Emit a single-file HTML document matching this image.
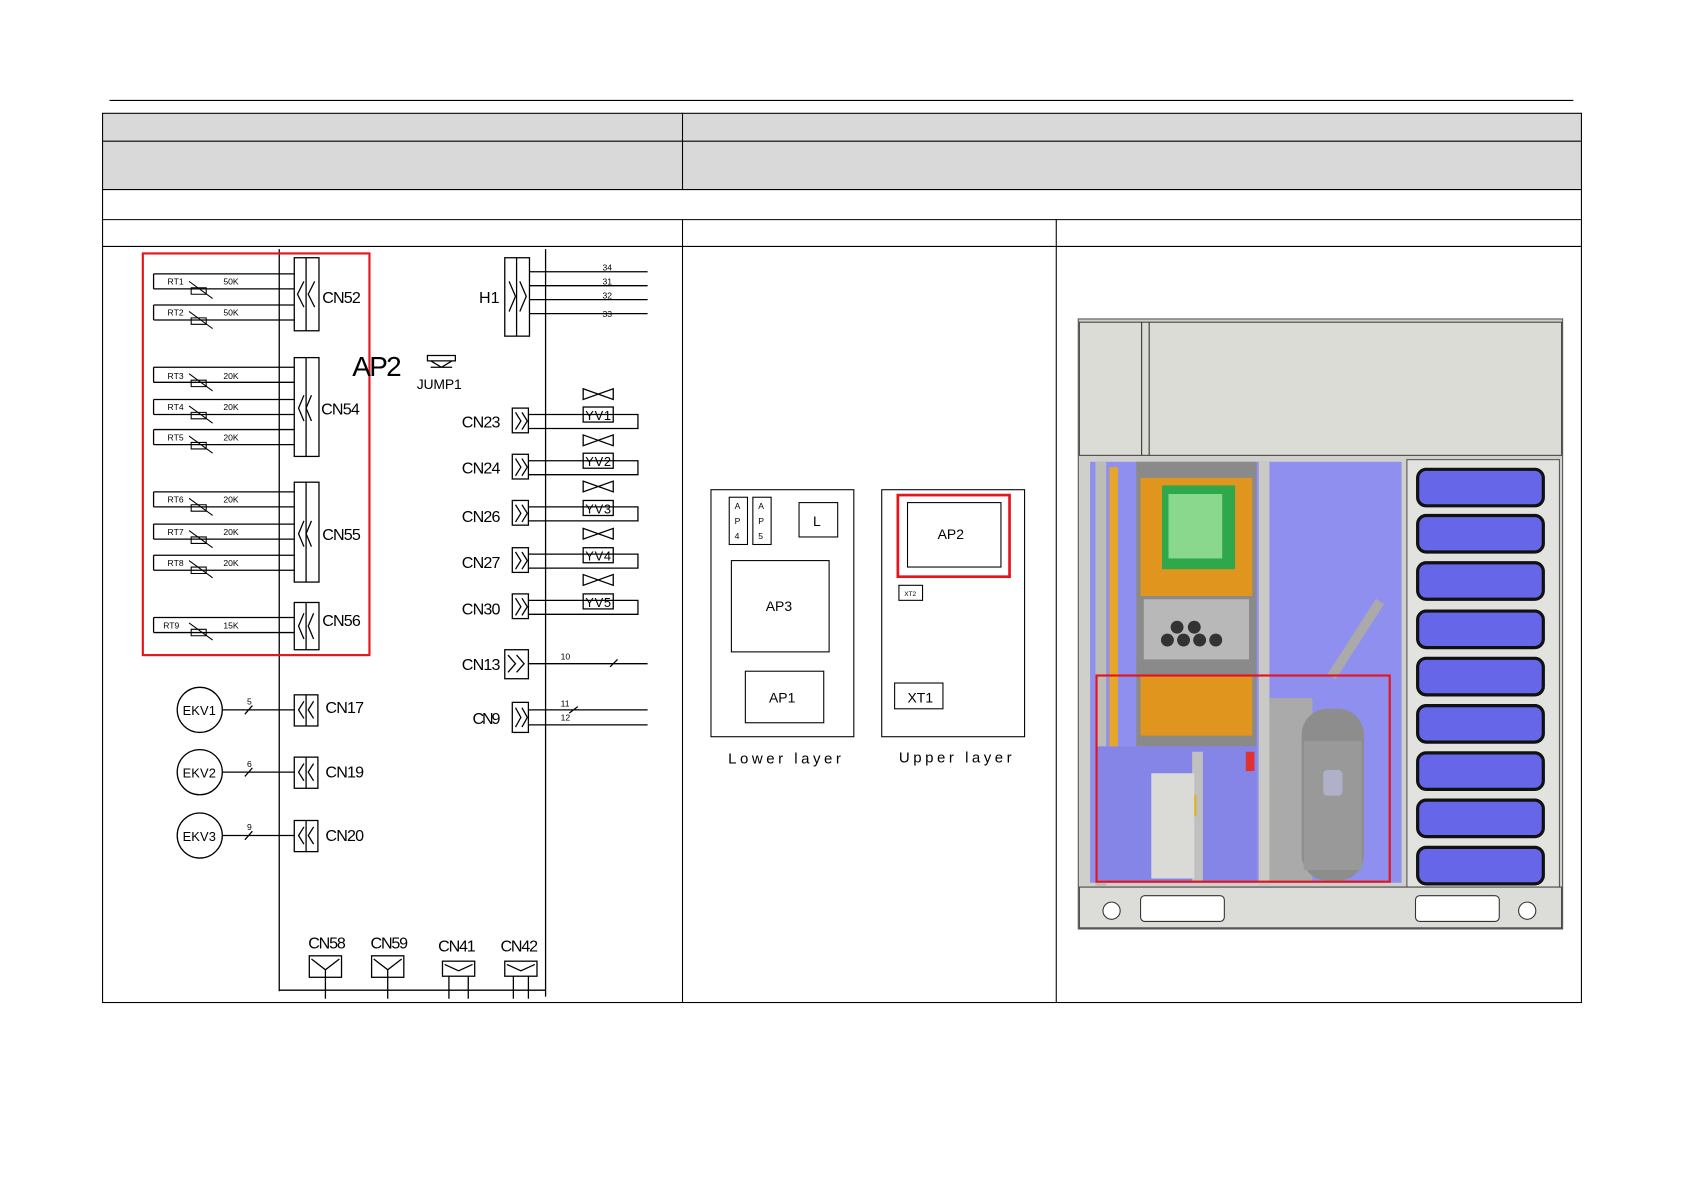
<!DOCTYPE html>
<html><head><meta charset="utf-8"><style>
html,body{margin:0;padding:0;background:#fff;}
svg{display:block;}
text{font-family:"Liberation Sans",sans-serif;}
</style></head><body>
<svg width="1684" height="1191" viewBox="0 0 1568 1109" preserveAspectRatio="none" xmlns="http://www.w3.org/2000/svg">
<rect width="1568" height="1109" fill="#fff"/>
<line x1="102" y1="93.5" x2="1465" y2="93.5" stroke="#000" stroke-width="1"/>
<rect x="95.5" y="105.5" width="1377" height="71" fill="#d9d9d9"/>
<g stroke="#000" stroke-width="1" fill="none">
<rect x="95.5" y="105.5" width="1377" height="828"/>
<line x1="95" y1="131.5" x2="1472" y2="131.5"/>
<line x1="95" y1="176.5" x2="1472" y2="176.5"/>
<line x1="95" y1="204.5" x2="1472" y2="204.5"/>
<line x1="95" y1="229.5" x2="1472" y2="229.5"/>
<line x1="635.5" y1="105" x2="635.5" y2="176"/>
<line x1="635.5" y1="204" x2="635.5" y2="933"/>
<line x1="983.5" y1="204" x2="983.5" y2="933"/>
</g>
<g stroke="#000" stroke-width="1.2" fill="none">
<line x1="260" y1="232" x2="260" y2="923"/>
<line x1="508" y1="232" x2="508" y2="928"/>
<line x1="260" y1="922" x2="508" y2="922"/>
<path d="M143 255H274M143 269H274M143 284H274M143 298H274"/>
<path d="M143 342H274M143 356H274M143 372H274M143 386H274M143 400H274M143 414H274"/>
<path d="M143 458H274M143 472H274M143 488H274M143 502H274M143 517H274M143 531H274"/>
<path d="M143 575H274M143 589H274"/>
<path d="M143 255V269M143 284V298M143 342V356M143 372V386M143 400V414M143 458V472M143 488V502M143 517V531M143 575V589"/>
<rect x="274" y="240" width="23" height="68"/><line x1="285" y1="240" x2="285" y2="308"/>
<path d="M283 262l-6 12 6 12M293 262l-6 12 6 12"/>
<rect x="274" y="333" width="23" height="92"/><line x1="285" y1="333" x2="285" y2="425"/>
<path d="M283 368l-5 12 5 12M290 368l-5 12 5 12"/>
<rect x="274" y="449" width="23" height="93"/><line x1="285" y1="449" x2="285" y2="542"/>
<path d="M283 485l-5 12 5 12M290 485l-5 12 5 12"/>
<rect x="274" y="561" width="23" height="44"/><line x1="285" y1="561" x2="285" y2="605"/>
<path d="M283 571l-5 12 5 12M292 571l-5 12 5 12"/>
<circle cx="186" cy="661" r="21"/><circle cx="186" cy="719" r="21"/><circle cx="186" cy="778" r="21"/>
<path d="M207 661H274M207 719H274M207 778H274M228 665l7-8M228 723l7-8M228 782l7-8"/>
<rect x="274" y="647" width="22" height="29"/><line x1="285" y1="647" x2="285" y2="676"/><path d="M283 653l-5 8 5 8M292 653l-5 8 5 8"/>
<rect x="274" y="705" width="22" height="29"/><line x1="285" y1="705" x2="285" y2="734"/><path d="M283 711l-5 8 5 8M292 711l-5 8 5 8"/>
<rect x="274" y="764" width="22" height="29"/><line x1="285" y1="764" x2="285" y2="793"/><path d="M283 770l-5 8 5 8M292 770l-5 8 5 8"/>
<rect x="288" y="890" width="30" height="20"/><path d="M290 893l13 10 13-10M303 903V930"/>
<rect x="346" y="890" width="30" height="20"/><path d="M348 893l13 10 13-10M361 903V930"/>
<rect x="412" y="895" width="30" height="14"/><path d="M414 898l13 6 13-6M418 909V930M436 909V930"/>
<rect x="470" y="895" width="30" height="14"/><path d="M472 898l13 6 13-6M478 909V930M492 909V930"/>
<rect x="470" y="240" width="23" height="73"/><line x1="481" y1="240" x2="481" y2="313"/>
<path d="M474 262l6 14-6 14M484 262l6 14-6 14"/>
<path d="M493 253H603M493 266H603M493 279H603M493 292H603"/>
<rect x="477" y="380" width="15" height="23"/><path d="M480 384l5 8-5 8M486 384l5 8-5 8M492 386H594V399H492"/>
<rect x="477" y="423" width="15" height="23"/><path d="M480 427l5 8-5 8M486 427l5 8-5 8M492 429H594V442H492"/>
<rect x="477" y="466" width="15" height="23"/><path d="M480 470l5 8-5 8M486 470l5 8-5 8M492 472H594V485H492"/>
<rect x="477" y="510" width="15" height="23"/><path d="M480 514l5 8-5 8M486 514l5 8-5 8M492 516H594V529H492"/>
<rect x="477" y="553" width="15" height="23"/><path d="M480 557l5 8-5 8M486 557l5 8-5 8M492 559H594V572H492"/>
<rect x="470" y="605" width="22" height="27"/><path d="M473 610l7 8-7 8M481 610l7 8-7 8M492 618H603M568 621l7-7"/>
<rect x="477" y="654" width="15" height="28"/><path d="M480 659l5 9-5 9M486 659l5 9-5 9M492 661H603M492 675H603M530 664l8-6"/>
<path d="M543 362l28 10V362l-28 10ZM543 405l28 10V405l-28 10ZM543 448l28 10V448l-28 10ZM543 492l28 10V492l-28 10ZM543 535l28 10V535l-28 10Z"/>
<rect x="543" y="379" width="28" height="14"/><rect x="543" y="422" width="28" height="14"/><rect x="543" y="466" width="28" height="14"/><rect x="543" y="510" width="28" height="14"/><rect x="543" y="553" width="28" height="14"/>
<path d="M398 331h26v5h-26zM401 336l10 6 10-6M401 342h20"/>
</g>
<g stroke="#000" stroke-width="1" fill="none">
<path d="M176 262l22 16M178 268h14v6h-14zM176 290l22 16M178 296h14v6h-14zM176 348l22 16M178 354h14v6h-14zM176 378l22 16M178 384h14v6h-14zM176 406l22 16M178 412h14v6h-14zM176 464l22 16M178 470h14v6h-14zM176 494l22 16M178 500h14v6h-14zM176 522l22 16M178 528h14v6h-14zM176 580l22 16M178 586h14v6h-14z"/>
</g>
<rect x="133" y="236" width="211" height="374" fill="none" stroke="#e8141c" stroke-width="2"/>
<g font-size="8">
<text x="156" y="265">RT1</text><text x="208" y="265">50K</text>
<text x="156" y="294">RT2</text><text x="208" y="294">50K</text>
<text x="156" y="353">RT3</text><text x="208" y="353">20K</text>
<text x="156" y="382">RT4</text><text x="208" y="382">20K</text>
<text x="156" y="410">RT5</text><text x="208" y="410">20K</text>
<text x="156" y="468">RT6</text><text x="208" y="468">20K</text>
<text x="156" y="498">RT7</text><text x="208" y="498">20K</text>
<text x="156" y="527">RT8</text><text x="208" y="527">20K</text>
<text x="152" y="585">RT9</text><text x="208" y="585">15K</text>
<text x="561" y="252">34</text><text x="561" y="265">31</text><text x="561" y="278">32</text><text x="561" y="295">33</text>
<text x="522" y="614">10</text><text x="522" y="658">11</text><text x="522" y="671">12</text>
<text x="230" y="656">5</text><text x="230" y="714">6</text><text x="230" y="773">9</text>
</g>
<g font-size="15">
<text x="300" y="282" textLength="36">CN52</text><text x="299" y="386" textLength="36">CN54</text><text x="300" y="503" textLength="36">CN55</text><text x="300" y="583" textLength="36">CN56</text>
<text x="303" y="664" textLength="36">CN17</text><text x="303" y="724" textLength="36">CN19</text><text x="303" y="783" textLength="36">CN20</text>
<text x="287" y="883" textLength="35">CN58</text><text x="345" y="883" textLength="35">CN59</text><text x="408" y="886" textLength="35">CN41</text><text x="466" y="886" textLength="35">CN42</text>
<text x="446" y="282">H1</text>
<text x="430" y="398" textLength="36">CN23</text><text x="430" y="441" textLength="36">CN24</text><text x="430" y="486" textLength="36">CN26</text><text x="430" y="529" textLength="36">CN27</text><text x="430" y="572" textLength="36">CN30</text><text x="430" y="624" textLength="36">CN13</text><text x="440" y="674" textLength="26">CN9</text>
<text x="388" y="362" font-size="13" textLength="42">JUMP1</text>
<text x="170" y="666" font-size="12" textLength="31">EKV1</text><text x="170" y="724" font-size="12" textLength="31">EKV2</text><text x="170" y="783" font-size="12" textLength="31">EKV3</text>
<text x="545" y="391" font-size="12" textLength="24">YV1</text><text x="545" y="434" font-size="12" textLength="24">YV2</text><text x="545" y="478" font-size="12" textLength="24">YV3</text><text x="545" y="522" font-size="12" textLength="24">YV4</text><text x="545" y="565" font-size="12" textLength="24">YV5</text>
</g>
<text x="328" y="350" font-size="26" textLength="46">AP2</text>
<g stroke="#000" stroke-width="1" fill="none">
<rect x="662" y="456" width="133" height="230"/><rect x="679" y="463" width="17" height="44"/><rect x="701" y="463" width="17" height="44"/>
<rect x="744" y="468" width="36" height="32"/><rect x="681" y="522" width="91" height="85"/><rect x="694" y="625" width="73" height="48"/>
<rect x="821" y="456" width="133" height="230"/><rect x="845" y="468" width="87" height="60"/><rect x="837" y="545" width="22" height="14"/><rect x="833" y="636" width="45" height="24"/>
</g>
<rect x="836" y="461" width="104" height="76" fill="none" stroke="#e8141c" stroke-width="2.5"/>
<g font-size="13">
<text x="757" y="490">L</text><text x="713" y="569">AP3</text><text x="716" y="654">AP1</text><text x="873" y="502">AP2</text><text x="845" y="654">XT1</text>
<text x="842" y="555" font-size="6">XT2</text>
<text x="684" y="474" font-size="8">A</text><text x="684" y="488" font-size="8">P</text><text x="684" y="502" font-size="8">4</text>
<text x="706" y="474" font-size="8">A</text><text x="706" y="488" font-size="8">P</text><text x="706" y="502" font-size="8">5</text>
<text x="678" y="711" font-family="Liberation Mono,monospace" font-size="14" textLength="105">Lower layer</text>
<text x="837" y="710" font-family="Liberation Mono,monospace" font-size="14" textLength="105">Upper layer</text>
</g>
<g>
<rect x="1004" y="297" width="451" height="568" fill="#cfcfcb" stroke="#555"/>
<rect x="1005" y="300" width="449" height="124" fill="#dcdcd6" stroke="#444"/>
<line x1="1063" y1="300" x2="1063" y2="424" stroke="#333"/><line x1="1070" y1="300" x2="1070" y2="424" stroke="#333"/>
<rect x="1015" y="430" width="290" height="392" fill="#8f8ff0"/>
<rect x="1310" y="428" width="142" height="398" fill="#e2e2de" stroke="#555"/>
<g fill="#6666e8" stroke="#111" stroke-width="3">
<rect x="1320" y="437" width="117" height="34" rx="8"/><rect x="1320" y="480" width="117" height="34" rx="8"/><rect x="1320" y="524" width="117" height="34" rx="8"/><rect x="1320" y="569" width="117" height="34" rx="8"/><rect x="1320" y="613" width="117" height="34" rx="8"/><rect x="1320" y="657" width="117" height="34" rx="8"/><rect x="1320" y="701" width="117" height="34" rx="8"/><rect x="1320" y="745" width="117" height="34" rx="8"/><rect x="1320" y="789" width="117" height="34" rx="8"/>
</g>
<rect x="1020" y="430" width="10" height="395" fill="#bdbdb8"/>
<rect x="1033" y="435" width="8" height="385" fill="#e5a62a"/>
<rect x="1172" y="430" width="10" height="395" fill="#c9c9c5"/>
<rect x="1058" y="430" width="112" height="265" fill="#8a8a8a"/>
<rect x="1062" y="445" width="104" height="110" fill="#e0951e"/>
<rect x="1082" y="452" width="68" height="78" fill="#2ea84a"/>
<rect x="1088" y="460" width="50" height="60" fill="#8ad88e"/>
<rect x="1065" y="558" width="98" height="56" fill="#b8b8b8"/>
<g fill="#333"><circle cx="1087" cy="596" r="6"/><circle cx="1102" cy="596" r="6"/><circle cx="1117" cy="596" r="6"/><circle cx="1132" cy="596" r="6"/><circle cx="1096" cy="584" r="6"/><circle cx="1112" cy="584" r="6"/></g>
<rect x="1062" y="630" width="104" height="55" fill="#e0951e"/>
<rect x="1020" y="695" width="150" height="125" fill="#8585e8"/>
<rect x="1110" y="700" width="10" height="120" fill="#c0c0c0"/><rect x="1100" y="740" width="14" height="20" fill="#e0b020"/>
<rect x="1072" y="720" width="40" height="98" fill="#dadad6"/>
<rect x="1182" y="650" width="40" height="170" fill="#aaa"/>
<rect x="1212" y="660" width="58" height="160" rx="24" fill="#8d8d8d"/>
<rect x="1214" y="690" width="54" height="120" fill="#999"/>
<rect x="1232" y="717" width="18" height="24" rx="4" fill="#b0b0c8"/>
<path d="M1240 630L1285 560" stroke="#aaa" stroke-width="9"/>
<rect x="1160" y="700" width="8" height="18" fill="#e03030"/>
<rect x="1021" y="629" width="273" height="192" fill="none" stroke="#e8141c" stroke-width="2"/>
<rect x="1005" y="826" width="449" height="38" fill="#dcdcd8" stroke="#444"/>
<rect x="1062" y="834" width="78" height="24" rx="4" fill="#fff" stroke="#333"/>
<rect x="1318" y="834" width="78" height="24" rx="4" fill="#fff" stroke="#333"/>
<circle cx="1035" cy="848" r="8" fill="#fff" stroke="#333"/><circle cx="1422" cy="848" r="8" fill="#fff" stroke="#333"/>
</g>
</svg>
</body></html>
